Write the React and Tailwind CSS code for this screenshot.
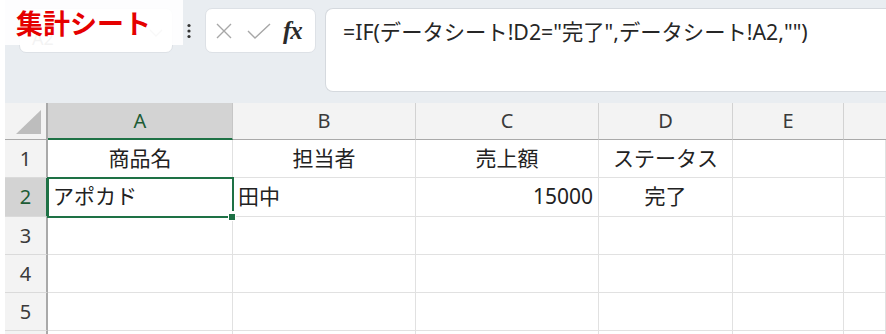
import React from "react";

const FONT = "font-['Noto_Sans','Noto_Sans_CJK_JP',sans-serif]";

function HeaderCell({ children, selected, last }) {
  return (
    <div
      className={
        "flex items-center justify-center text-[20px] " +
        (selected
          ? "bg-[#d3d3d3] text-[#1d5c35] border-r border-r-[#c6c6c6] border-b-2 border-b-[#1e7145]"
          : "bg-[#f3f3f3] text-[#3a3a3a] border-r border-r-[#d2d2d2] border-b border-b-[#a9a9a9]") +
        (last ? " border-r-0" : "")
      }
    >
      {children}
    </div>
  );
}

function RowHead({ n, selected }) {
  return (
    <div
      className={
        "flex items-center justify-center text-[20px] border-b border-b-[#dadada] " +
        (selected
          ? "bg-[#d3d3d3] text-[#1d5c35] border-r-2 border-r-[#1e7145]"
          : "bg-[#f3f3f3] text-[#3a3a3a] border-r-2 border-r-[#a9a9a9]")
      }
    >
      {n}
    </div>
  );
}

function Cell({ children, align = "left" }) {
  const a =
    align === "center"
      ? "justify-center"
      : align === "right"
      ? "justify-end pr-[5px]"
      : "justify-start pl-[5px]";
  return (
    <div
      className={
        "flex items-center text-[21px] text-[#222] border-r border-b border-[#e1e1e1] overflow-hidden whitespace-nowrap " +
        a
      }
    >
      {children}
    </div>
  );
}

export default function App() {
  const rows = [
    ["商品名", "担当者", "売上額", "ステータス", "", ""],
    ["アポカド", "田中", "15000", "完了", "", ""],
    ["", "", "", "", "", ""],
    ["", "", "", "", "", ""],
    ["", "", "", "", "", ""],
    ["", "", "", "", "", ""],
  ];
  const aligns = [
    ["center", "center", "center", "center", "left", "left"],
    ["left", "left", "right", "center", "left", "left"],
  ];
  return (
    <div className={"relative w-[886px] h-[334px] overflow-hidden bg-white " + FONT}>
      {/* toolbar */}
      <div className="ml-[5px] h-[103px] bg-[#e9edf1] flex items-start pt-[8px]">
        <div className="ml-[14px] w-[154px] h-[45px] bg-white rounded-[7px] border border-[#dde1e6] flex items-end justify-between pl-[12px] pr-[9px] pb-[2px]">
          <span className="text-[18px] text-[#888] leading-[24px]">A2</span>
          <svg width="14" height="10" viewBox="0 0 14 10" className="mb-[12px]">
            <path d="M1 2 L7 8 L13 2" fill="none" stroke="#b8b8b8" strokeWidth="1.3" />
          </svg>
        </div>
        <div className="w-[32px] h-[45px] flex items-center justify-center">
          <svg width="4" height="16" viewBox="0 0 4 16">
            <circle cx="2" cy="2.5" r="1.6" fill="#333" />
            <circle cx="2" cy="8" r="1.6" fill="#333" />
            <circle cx="2" cy="13.5" r="1.6" fill="#333" />
          </svg>
        </div>
        <div className="w-[111px] h-[45px] bg-white rounded-[7px] border border-[#dde1e6] flex items-center pl-[8px]">
          <svg width="20" height="20" viewBox="0 0 20 20">
            <path d="M3 3 L17 17 M17 3 L3 17" stroke="#a7a7a7" strokeWidth="1.4" fill="none" />
          </svg>
          <svg width="26" height="20" viewBox="0 0 26 20" className="ml-[12px]">
            <path d="M2 10 L9 17 L24 3" stroke="#a7a7a7" strokeWidth="1.4" fill="none" />
          </svg>
          <span className="ml-[11px] font-['Liberation_Serif',serif] italic font-bold text-[25px] text-[#2a2a2a] leading-none tracking-[-1px]">
            fx
          </span>
        </div>
        <div className="ml-[9px] flex-1 h-[84px] bg-white rounded-l-[8px] border border-r-0 border-[#d5d9de] pl-[17px] pt-[9px]">
          <span className="text-[21.3px] text-[#262626] whitespace-nowrap leading-[28px]">
            =IF(データシート!D2="完了",データシート!A2,"")
          </span>
        </div>
      </div>

      {/* grid */}
      <div className="relative ml-[5px] grid grid-cols-[43px_185px_183px_183px_134px_111px_1fr] grid-rows-[37px_38px_39px_38px_38px_38px_38px]">
        <div className="relative bg-[#f3f3f3] border-r-2 border-r-[#a9a9a9] border-b border-b-[#a9a9a9]">
          <svg width="26" height="24" viewBox="0 0 26 24" className="absolute right-[4px] bottom-[5px]">
            <path d="M25 0 L25 24 L0 24 Z" fill="#bdbdbd" />
          </svg>
        </div>
        <HeaderCell selected>A</HeaderCell>
        <HeaderCell>B</HeaderCell>
        <HeaderCell>C</HeaderCell>
        <HeaderCell>D</HeaderCell>
        <HeaderCell>E</HeaderCell>
        <HeaderCell last></HeaderCell>

        {rows.map((r, i) => (
          <React.Fragment key={i}>
            <RowHead n={i < 5 ? i + 1 : ""} selected={i === 1} />
            {r.map((c, j) => (
              <Cell key={j} align={(aligns[i] || [])[j] || "left"}>
                {c}
              </Cell>
            ))}
          </React.Fragment>
        ))}

        {/* selection overlay */}
        <div className="absolute left-[42px] top-[74px] w-[187px] h-[41px] border-2 border-[#1e7145] pointer-events-none" />
        <div className="absolute left-[222px] top-[108px] w-[11px] h-[5px] bg-white pointer-events-none" />
        <div className="absolute left-[223px] top-[110px] w-[8px] h-[8px] bg-[#1e7145] border border-white pointer-events-none" />
      </div>

      {/* annotation label */}
      <div className="absolute left-0 top-0 w-[183px] h-[45px] bg-white/90 flex items-center pl-[16px]">
        <span className="text-[27px] font-bold text-[#e50000] leading-none font-['Noto_Sans_CJK_JP',sans-serif]">
          集計シート
        </span>
      </div>
    </div>
  );
}
